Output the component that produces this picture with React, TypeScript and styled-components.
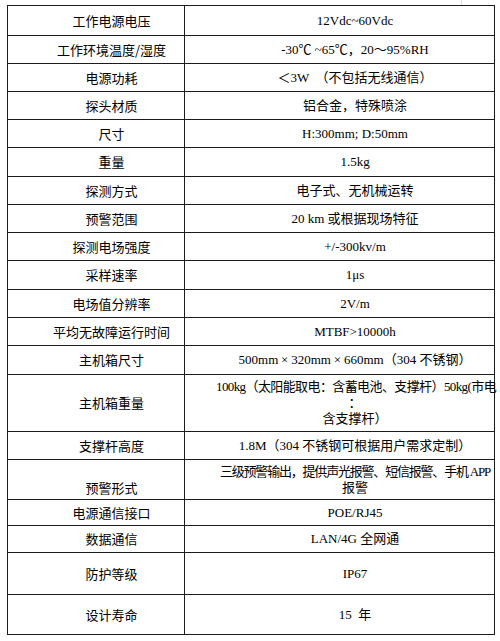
import React from 'react';
import styled, { createGlobalStyle } from 'styled-components';

const GlobalStyle = createGlobalStyle`
  html, body { margin: 0; padding: 0; background: #fff; }
  body { width: 500px; height: 641px; overflow: hidden; }
`;

const Page = styled.div`
  padding: 5px 0 0 7px;
`;

const Table = styled.div`
  position: relative;
  width: 488px;
  box-sizing: border-box;
  border: 1px solid #1c1c1c;
  display: flex;
  flex-direction: column;
  &::before {
    content: '';
    position: absolute;
    left: 453px;
    top: -6px;
    width: 1px;
    height: 5px;
    background: #dedede;
  }
`;

const Row = styled.div<{ $h: number }>`
  display: grid;
  grid-template-columns: 176px 1fr;
  height: ${p => p.$h}px;
  box-sizing: border-box;
  & + & {
    border-top: 1px solid #1c1c1c;
  }
`;

const Label = styled.div<{ $valign?: 'center' | 'end' }>`
  display: flex;
  justify-content: center;
  align-items: ${p => (p.$valign === 'end' ? 'flex-end' : 'center')};
  padding: 0 0 ${p => (p.$valign === 'end' ? '3px' : '0')} 31px;
  font-family: "Noto Sans CJK SC", sans-serif;
  font-size: 13px;
  line-height: 16px;
  color: #000;
  white-space: nowrap;
`;

const Value = styled.div`
  border-left: 1px solid #1c1c1c;
  display: flex;
  flex-direction: column;
  justify-content: center;
  padding-left: 31px;
  min-width: 0;
  font-family: "Liberation Serif", "Noto Sans CJK SC", serif;
  font-size: 13px;
  line-height: 16px;
  color: #000;
  text-align: center;
`;

const Line = styled.div<{ $squeeze?: number }>`
  white-space: pre;
  letter-spacing: ${p => p.$squeeze ?? 0}px;
`;

const Wide = styled.span`
  display: inline-block;
  width: 1em;
  text-align: center;
`;

type Spec = {
  label: string;
  h: number;
  lines: { text: React.ReactNode; squeeze?: number }[];
  valign?: 'center' | 'end';
};

const rows: Spec[] = [
  { label: '工作电源电压', h: 29, lines: [{ text: '12Vdc~60Vdc' }] },
  { label: '工作环境温度/湿度', h: 28, lines: [{ text: '-30℃ ~65℃，20～95%RH' }] },
  { label: '电源功耗', h: 28, lines: [{ text: '＜3W　（不包括无线通信）' }] },
  { label: '探头材质', h: 28, lines: [{ text: '铝合金，特殊喷涂' }] },
  { label: '尺寸', h: 28, lines: [{ text: 'H:300mm; D:50mm' }] },
  { label: '重量', h: 29, lines: [{ text: '1.5kg' }] },
  { label: '探测方式', h: 28, lines: [{ text: '电子式、无机械运转' }] },
  { label: '预警范围', h: 28, lines: [{ text: '20 km 或根据现场特征' }] },
  { label: '探测电场强度', h: 28, lines: [{ text: '+/-300kv/m' }] },
  { label: '采样速率', h: 29, lines: [{ text: '1μs' }] },
  { label: '电场值分辨率', h: 28, lines: [{ text: '2V/m' }] },
  { label: '平均无故障运行时间', h: 28, lines: [{ text: 'MTBF>10000h' }] },
  {
    label: '主机箱尺寸',
    h: 29,
    lines: [
      {
        text: (
          <>
            500mm<Wide>×</Wide>320mm<Wide>×</Wide>660mm（304 不锈钢）
          </>
        ),
      },
    ],
  },
  {
    label: '主机箱重量',
    h: 57,
    lines: [
      { text: '100kg（太阳能取电：含蓄电池、支撑杆）50kg(市电', squeeze: -0.6 },
      { text: '：' },
      { text: '含支撑杆）' },
    ],
  },
  { label: '支撑杆高度', h: 28, lines: [{ text: '1.8M（304 不锈钢可根据用户需求定制）' }] },
  {
    label: '预警形式',
    h: 40,
    valign: 'end',
    lines: [
      { text: '三级预警输出，提供声光报警、短信报警、手机 APP', squeeze: -1.2 },
      { text: '报警' },
    ],
  },
  { label: '电源通信接口', h: 26, lines: [{ text: 'POE/RJ45' }] },
  { label: '数据通信', h: 27, lines: [{ text: 'LAN/4G 全网通' }] },
  { label: '防护等级', h: 42, lines: [{ text: 'IP67' }] },
  { label: '设计寿命', h: 40, lines: [{ text: '15  年' }] },
];

export default function App() {
  return (
    <>
      <GlobalStyle />
      <Page>
        <Table>
          {rows.map((r, i) => (
            <Row key={i} $h={r.h}>
              <Label $valign={r.valign}>{r.label}</Label>
              <Value>
                {r.lines.map((l, j) => (
                  <Line key={j} $squeeze={l.squeeze}>
                    {l.text}
                  </Line>
                ))}
              </Value>
            </Row>
          ))}
        </Table>
      </Page>
    </>
  );
}
